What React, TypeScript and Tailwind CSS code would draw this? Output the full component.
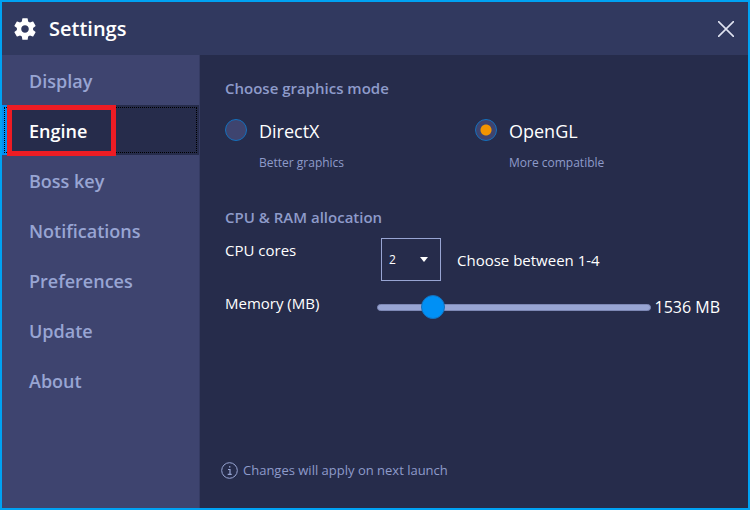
import { useState } from 'react'

const TABS = ['Display', 'Engine', 'Boss key', 'Notifications', 'Preferences', 'Update', 'About']

const MODES = [
  { id: 'directx', label: 'DirectX', note: 'Better graphics' },
  { id: 'opengl', label: 'OpenGL', note: 'More compatible' },
]

function GearIcon() {
  return (
    <svg viewBox="0 0 24 24" className="size-[26px] fill-white" aria-hidden="true">
      <path d="M19.43 12.98c.04-.32.07-.64.07-.98s-.03-.66-.07-.98l2.11-1.65c.19-.15.24-.42.12-.64l-2-3.46c-.12-.22-.39-.3-.61-.22l-2.49 1c-.52-.4-1.08-.73-1.69-.98l-.38-2.65C14.46 2.18 14.25 2 14 2h-4c-.25 0-.46.18-.49.42l-.38 2.65c-.61.25-1.17.59-1.69.98l-2.49-1c-.23-.09-.49 0-.61.22l-2 3.46c-.13.22-.07.49.12.64l2.11 1.65c-.04.32-.07.65-.07.98s.03.66.07.98l-2.11 1.65c-.19.15-.24.42-.12.64l2 3.46c.12.22.39.3.61.22l2.49-1c.52.4 1.08.73 1.69.98l.38 2.65c.03.24.24.42.49.42h4c.25 0 .46-.18.49-.42l.38-2.65c.61-.25 1.17-.59 1.69-.98l2.49 1c.23.09.49 0 .61-.22l2-3.46c.12-.22.07-.49-.12-.64l-2.11-1.65zM12 15.5c-1.93 0-3.5-1.57-3.5-3.5s1.57-3.5 3.5-3.5 3.5 1.57 3.5 3.5-1.57 3.5-3.5 3.5z" />
    </svg>
  )
}

function Header() {
  return (
    <header className="flex h-[53px] items-center bg-[#31395f] pr-[14px] pl-[10px]">
      <GearIcon />
      <h1 className="ml-[11px] text-xl font-semibold text-white">Settings</h1>
      <button type="button" aria-label="Close" className="ml-auto">
        <svg viewBox="0 0 16 16" className="size-4 stroke-[#dfe2f0]" strokeWidth="1.6" aria-hidden="true">
          <path d="M0 0l16 16M16 0L0 16" />
        </svg>
      </button>
    </header>
  )
}

function Sidebar({ active, onSelect }: { active: string; onSelect: (tab: string) => void }) {
  return (
    <nav className="flex w-[198px] shrink-0 flex-col border-r border-[#353b63] bg-[#3e446f]">
      {TABS.map((tab) =>
        tab === active ? (
          <button
            key={tab}
            type="button"
            aria-current="page"
            className="relative h-[50px] border-l-[5px] border-[#0090f5] bg-[#262c4b] pt-[2px] pl-[22px] text-left text-lg font-semibold text-white"
          >
            <span className="absolute top-[2px] right-[2px] bottom-[2px] -left-[3px] border border-dotted border-black" />
            <span className="absolute top-0 left-0 h-[51px] w-[109px] border-[5px] border-[#ed1c24]" />
            {tab}
          </button>
        ) : (
          <button
            key={tab}
            type="button"
            onClick={() => onSelect(tab)}
            className="h-[50px] pt-[2px] pl-[27px] text-left text-lg font-semibold text-[#98a5d3]"
          >
            {tab}
          </button>
        ),
      )}
    </nav>
  )
}

export default function App() {
  const [tab, setTab] = useState('Engine')
  const [mode, setMode] = useState('opengl')
  const [cores, setCores] = useState('2')
  const [memory, setMemory] = useState(1536)

  return (
    <div className="flex min-h-screen flex-col border-2 border-[#00a2f3] bg-[#262c4b] font-['Open_Sans','Noto_Sans',sans-serif]">
      <Header />
      <div className="flex grow">
        <Sidebar active={tab} onSelect={setTab} />

        <main className="flex min-w-0 grow flex-col pr-7 pb-7 pl-[25px]">
          <fieldset className="mt-[21px]">
            <legend className="text-[15px] leading-6 font-semibold text-[#8e9bca]">Choose graphics mode</legend>
            <div className="mt-[19px] grid grid-cols-[250px_1fr]">
              {MODES.map((m) => (
                <div key={m.id} className="flex gap-3">
                  <input
                    id={m.id}
                    type="radio"
                    name="mode"
                    checked={mode === m.id}
                    onChange={() => setMode(m.id)}
                    className="size-[22px] shrink-0 appearance-none rounded-full border border-[#1470bd] bg-[#3e446f] checked:bg-[radial-gradient(circle,#f29400_5px,#3e446f_6px)]"
                  />
                  <div>
                    <label htmlFor={m.id} className="block text-lg leading-6 text-white">
                      {m.label}
                    </label>
                    <p className="mt-[10px] text-xs leading-5 text-[#8e9bca]">{m.note}</p>
                  </div>
                </div>
              ))}
            </div>
          </fieldset>

          <section className="mt-8">
            <h2 className="text-[15px] leading-6 font-semibold text-[#8e9bca]">CPU &amp; RAM allocation</h2>
            <div className="mt-[9px] flex">
              <label htmlFor="cores" className="w-[156px] text-[15px] leading-6 text-white">
                CPU cores
              </label>
              <div className="relative">
                <select
                  id="cores"
                  value={cores}
                  onChange={(e) => setCores(e.target.value)}
                  className="h-[43px] w-[60px] appearance-none border border-[#98a5d3] bg-[#262c4b] pl-[7px] text-xs text-white"
                >
                  {['1', '2', '3', '4'].map((n) => (
                    <option key={n}>{n}</option>
                  ))}
                </select>
                <svg viewBox="0 0 8 5" className="pointer-events-none absolute top-[19px] right-[13px] h-[5px] w-2 fill-white" aria-hidden="true">
                  <path d="M0 0h8L4 5z" />
                </svg>
              </div>
              <span className="ml-4 self-center text-[15px] leading-6 text-white">Choose between 1-4</span>
            </div>
            <div className="mt-[10px] flex items-center">
              <label htmlFor="memory" className="w-[152px] shrink-0 pb-2 text-[15px] leading-6 text-white">
                Memory (MB)
              </label>
              <input
                id="memory"
                type="range"
                min={1024}
                max={4000}
                value={memory}
                onChange={(e) => setMemory(Number(e.target.value))}
                className="h-6 min-w-0 grow appearance-none bg-transparent [&::-webkit-slider-runnable-track]:h-[7px] [&::-webkit-slider-runnable-track]:rounded-full [&::-webkit-slider-runnable-track]:border [&::-webkit-slider-runnable-track]:border-[#7d88b5] [&::-webkit-slider-runnable-track]:bg-[#98a5d3] [&::-webkit-slider-thumb]:-mt-[10px] [&::-webkit-slider-thumb]:size-6 [&::-webkit-slider-thumb]:appearance-none [&::-webkit-slider-thumb]:rounded-full [&::-webkit-slider-thumb]:border [&::-webkit-slider-thumb]:border-[#1470bd] [&::-webkit-slider-thumb]:bg-[#0090f5]"
              />
              <output htmlFor="memory" className="ml-1 shrink-0 text-base text-white">
                {memory} MB
              </output>
            </div>
          </section>

          <p className="mt-auto -ml-1 flex items-center gap-[5px] text-[13px] leading-5 text-[#8e9bca]">
            <svg viewBox="0 0 17 17" className="size-[17px] fill-none stroke-[#98a5d3]" aria-hidden="true">
              <circle cx="8.5" cy="8.5" r="7.8" />
              <path d="M7 7.5h2v4.5M6.7 12.3h4M8 4.9h1.4" strokeWidth="1.2" />
            </svg>
            Changes will apply on next launch
          </p>
        </main>
      </div>
    </div>
  )
}
